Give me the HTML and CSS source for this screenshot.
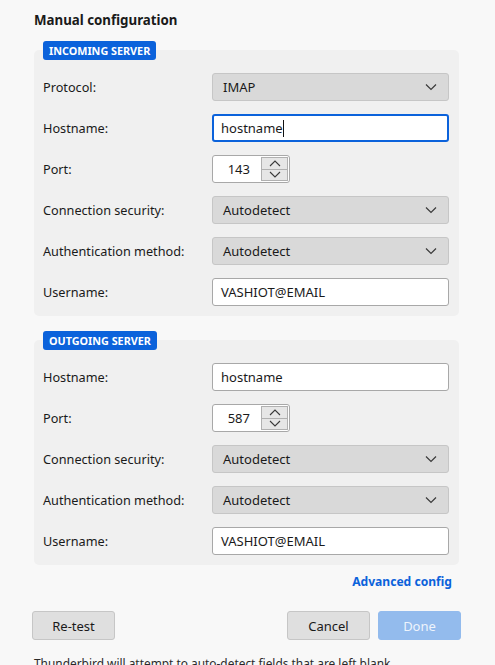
FILE: index.html
```html
<!DOCTYPE html>
<html>
<head>
<meta charset="utf-8">
<link rel="stylesheet" href="styles.css">
</head>
<body>
<div class="page">
  <h1 class="title">Manual configuration</h1>

  <section class="section">
    <div class="badge">INCOMING SERVER</div>
    <div class="panel">
      <div class="label">Protocol:</div>
      <div class="select"><span>IMAP</span><svg class="chev" width="12" height="8" viewBox="0 0 12 8"><path d="M1 1.5 L6 6.5 L11 1.5" fill="none" stroke="#3a3a3a" stroke-width="1.2"/></svg></div>

      <div class="label">Hostname:</div>
      <div class="input focused"><span>hostname</span><span class="caret"></span></div>

      <div class="label">Port:</div>
      <div class="port"><span class="num">143</span><div class="spin"><div class="sb"><svg width="12" height="7" viewBox="0 0 12 7"><path d="M1 6 L6 1 L11 6" fill="none" stroke="#3a3a3a" stroke-width="1.1"/></svg></div><div class="sb"><svg width="12" height="7" viewBox="0 0 12 7"><path d="M1 1 L6 6 L11 1" fill="none" stroke="#3a3a3a" stroke-width="1.1"/></svg></div></div></div>

      <div class="label">Connection security:</div>
      <div class="select"><span>Autodetect</span><svg class="chev" width="12" height="8" viewBox="0 0 12 8"><path d="M1 1.5 L6 6.5 L11 1.5" fill="none" stroke="#3a3a3a" stroke-width="1.2"/></svg></div>

      <div class="label">Authentication method:</div>
      <div class="select"><span>Autodetect</span><svg class="chev" width="12" height="8" viewBox="0 0 12 8"><path d="M1 1.5 L6 6.5 L11 1.5" fill="none" stroke="#3a3a3a" stroke-width="1.2"/></svg></div>

      <div class="label">Username:</div>
      <div class="input"><span>VASHIOT@EMAIL</span></div>
    </div>
  </section>

  <section class="section">
    <div class="badge">OUTGOING SERVER</div>
    <div class="panel">
      <div class="label">Hostname:</div>
      <div class="input"><span>hostname</span></div>

      <div class="label">Port:</div>
      <div class="port"><span class="num">587</span><div class="spin"><div class="sb"><svg width="12" height="7" viewBox="0 0 12 7"><path d="M1 6 L6 1 L11 6" fill="none" stroke="#3a3a3a" stroke-width="1.1"/></svg></div><div class="sb"><svg width="12" height="7" viewBox="0 0 12 7"><path d="M1 1 L6 6 L11 1" fill="none" stroke="#3a3a3a" stroke-width="1.1"/></svg></div></div></div>

      <div class="label">Connection security:</div>
      <div class="select"><span>Autodetect</span><svg class="chev" width="12" height="8" viewBox="0 0 12 8"><path d="M1 1.5 L6 6.5 L11 1.5" fill="none" stroke="#3a3a3a" stroke-width="1.2"/></svg></div>

      <div class="label">Authentication method:</div>
      <div class="select"><span>Autodetect</span><svg class="chev" width="12" height="8" viewBox="0 0 12 8"><path d="M1 1.5 L6 6.5 L11 1.5" fill="none" stroke="#3a3a3a" stroke-width="1.2"/></svg></div>

      <div class="label">Username:</div>
      <div class="input"><span>VASHIOT@EMAIL</span></div>
    </div>
  </section>

  <div class="adv"><a class="link">Advanced config</a></div>

  <div class="buttons">
    <button class="btn">Re-test</button>
    <div class="spacer"></div>
    <button class="btn">Cancel</button>
    <button class="btn primary">Done</button>
  </div>

  <p class="footer">Thunderbird will attempt to auto-detect fields that are left blank.</p>
</div>
</body>
</html>
```

FILE: styles.css
```css
* { box-sizing: border-box; }
html, body { margin: 0; padding: 0; }
body {
  background: #f8f8f8;
  font-family: "Noto Sans", "Open Sans", sans-serif;
  font-size: 13px;
  color: #1a1a1a;
  width: 495px;
  height: 665px;
  overflow: hidden;
}
.page { padding: 9px 36px 0 34px; }
.title {
  font-size: 13.3px;
  font-weight: 700;
  margin: 0 0 10px 0;
  line-height: 22px;
}
.section {
  display: flex;
  flex-direction: column;
  align-items: flex-start;
  margin-bottom: 15px;
}
.badge {
  position: relative;
  z-index: 1;
  margin-left: 9px;
  margin-bottom: -10px;
  background: #0b62db;
  color: #fff;
  font-size: 10.8px;
  font-weight: 700;
  line-height: 19px;
  height: 19px;
  padding: 0 6px;
  border-radius: 3px;
}
.panel {
  align-self: stretch;
  background: #f0f0f0;
  border-radius: 5px;
  padding: 23px 10px 10px 9px;
  display: grid;
  grid-template-columns: 169px 1fr;
  row-gap: 13px;
  align-items: center;
}
.label { line-height: 28px; font-size: 12.7px; }
.select, .input, .port {
  height: 28px;
  border-radius: 3px;
  display: flex;
  align-items: center;
}
.select {
  background: #d9d9d9;
  border: 1px solid #c6c6c6;
  padding: 0 11px 0 10px;
  justify-content: space-between;
}
.select .chev { display: block; }
.input {
  background: #fff;
  border: 1px solid #a8a8a8;
  padding: 0 8px;
}
.input.focused {
  border: 2px solid #0b62db;
  padding: 0 7px;
}
.caret {
  display: inline-block;
  width: 1px;
  height: 17px;
  background: #111;
}
.port {
  width: 78px;
  background: #fff;
  border: 1px solid #a8a8a8;
  justify-content: space-between;
  padding: 0 1px 0 0;
}
.port .num { flex: 1; text-align: right; padding-right: 11px; }
.spin {
  width: 27px;
  height: 24px;
  border: 1px solid #b0b0b0;
  display: flex;
  flex-direction: column;
}
.sb {
  flex: 1;
  background: #e6e6e6;
  display: flex;
  align-items: center;
  justify-content: center;
}
.sb + .sb { border-top: 1px solid #b0b0b0; }
.sb svg { display: block; }
.adv {
  display: flex;
  justify-content: flex-end;
  padding-right: 7px;
  margin-top: -7px;
  line-height: 18px;
}
.link {
  color: #0b62db;
  font-weight: 700;
  font-size: 12.1px;
}
.buttons {
  display: flex;
  gap: 8px;
  margin: 20px -2px 0 -2px;
}
.spacer { flex: 1; }
.btn {
  width: 83px;
  height: 29px;
  font-family: inherit;
  font-size: 13px;
  color: #1a1a1a;
  background: #dfdfdf;
  border: 1px solid #c6c6c6;
  border-radius: 3px;
  padding: 0;
}
.btn.primary {
  background: #93bbed;
  border-color: #93bbed;
  color: #eef4fc;
}
.footer {
  margin: 15px 0 0 0;
  font-size: 11.9px;
  line-height: 16px;
  color: #2a2a2a;
}
```
